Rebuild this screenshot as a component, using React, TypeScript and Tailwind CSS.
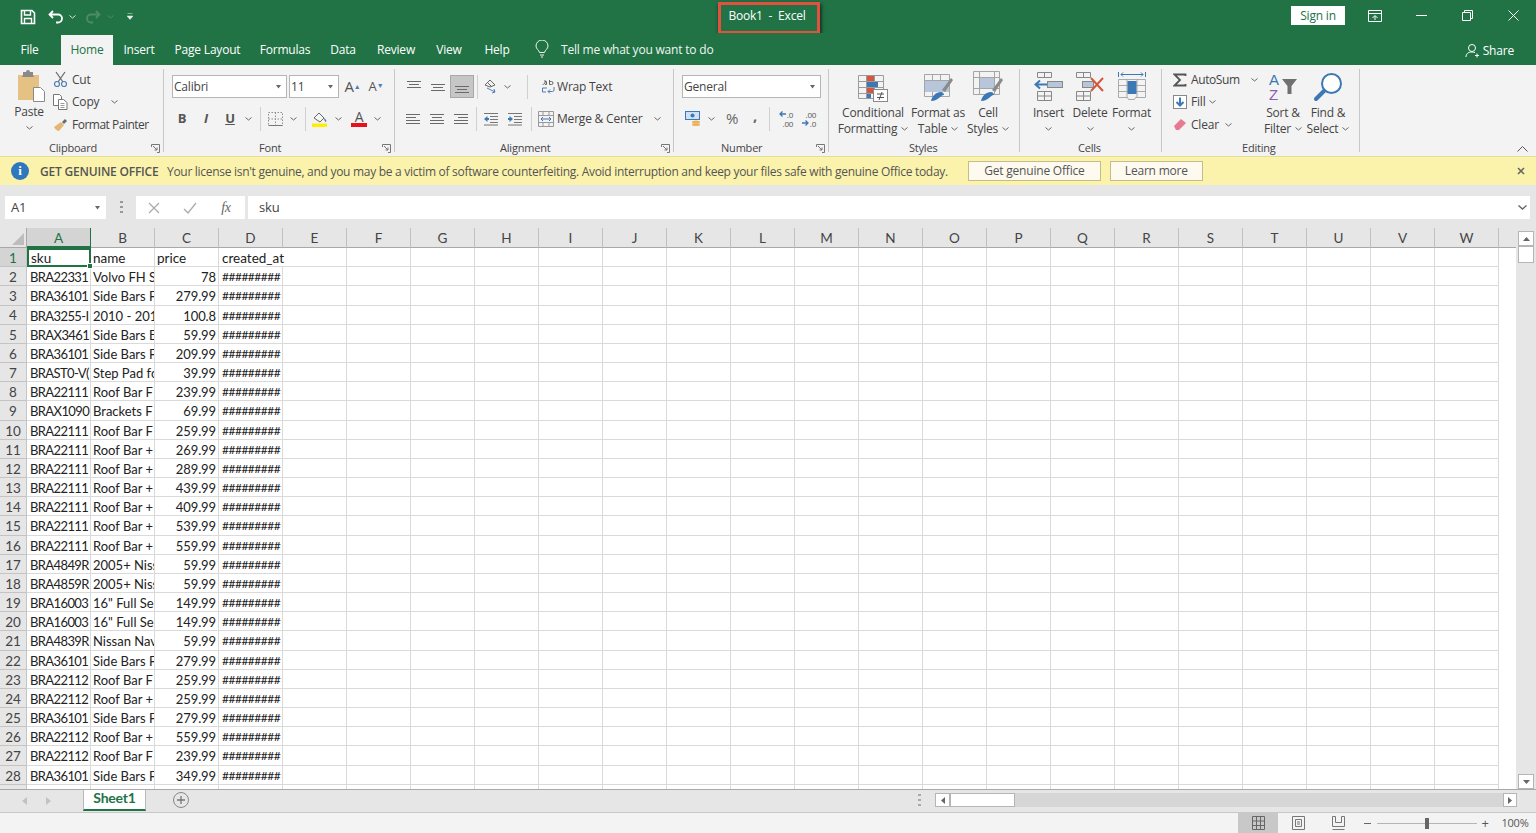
import { Fragment, ReactNode } from "react";

const COLS = "ABCDEFGHIJKLMNOPQRSTUVW".split("");

const ROWS: [string, string, string][] = [
  ["BRA22331", "Volvo FH S", "78"],
  ["BRA36101", "Side Bars F", "279.99"],
  ["BRA3255-I", "2010 - 201", "100.8"],
  ["BRAX3461", "Side Bars E", "59.99"],
  ["BRA36101", "Side Bars F", "209.99"],
  ["BRAST0-V(", "Step Pad fc", "39.99"],
  ["BRA22111", "Roof Bar F", "239.99"],
  ["BRAX1090", "Brackets F", "69.99"],
  ["BRA22111", "Roof Bar F", "259.99"],
  ["BRA22111", "Roof Bar +", "269.99"],
  ["BRA22111", "Roof Bar +", "289.99"],
  ["BRA22111", "Roof Bar +", "439.99"],
  ["BRA22111", "Roof Bar +", "409.99"],
  ["BRA22111", "Roof Bar +", "539.99"],
  ["BRA22111", "Roof Bar +", "559.99"],
  ["BRA4849R", "2005+ Niss", "59.99"],
  ["BRA4859R", "2005+ Niss", "59.99"],
  ["BRA16003", '16" Full Se', "149.99"],
  ["BRA16003", '16" Full Se', "149.99"],
  ["BRA4839R", "Nissan Nav", "59.99"],
  ["BRA36101", "Side Bars F", "279.99"],
  ["BRA22112", "Roof Bar F", "259.99"],
  ["BRA22112", "Roof Bar +", "259.99"],
  ["BRA36101", "Side Bars F", "279.99"],
  ["BRA22112", "Roof Bar +", "559.99"],
  ["BRA22112", "Roof Bar F", "239.99"],
  ["BRA36101", "Side Bars F", "349.99"],
];

function Chev({ color = "#666" }: { color?: string }) {
  return (
    <svg width="7" height="4" viewBox="0 0 7 4" className="inline-block shrink-0">
      <path d="M.5.5 3.5 3 6.5.5" fill="none" stroke={color} strokeWidth="1" />
    </svg>
  );
}

function Caret() {
  return (
    <svg width="7" height="4" viewBox="0 0 7 4" className="shrink-0">
      <path d="M1 0h5L3.5 3.5z" fill="#666" />
    </svg>
  );
}

function Slot({ w, children }: { w: string; children?: ReactNode }) {
  return <div className={`flex items-center justify-center shrink-0 h-full ${w}`}>{children}</div>;
}

function VSep() {
  return <div className="w-px h-[24px] bg-[#d0d0d0]" />;
}

function Lines({ a, b, c }: { a: [number, number]; b: [number, number]; c: [number, number] }) {
  return (
    <svg width="16" height="14" viewBox="0 0 16 14">
      <g stroke="#6a6a6a" strokeWidth="1">
        <path d={`M${a[0]} 2.5H${a[1]}M${b[0]} 5.5H${b[1]}M${c[0]} 8.5H${c[1]}M${a[0]} 11.5H${a[1]}`} />
      </g>
    </svg>
  );
}

function VAlign({ y }: { y: number }) {
  return (
    <svg width="16" height="14" viewBox="0 0 16 14">
      <path d={`M1 ${y}.5H15M3 ${y + 3}.5H13M1 ${y + 6}.5H15`} stroke="#6a6a6a" fill="none" />
    </svg>
  );
}

function Launcher() {
  return (
    <svg width="9" height="9" viewBox="0 0 9 9" className="shrink-0">
      <path d="M.5 3V.5H8.5V8.5H6M2 2l4 4M6 3.5V6H3.5" fill="none" stroke="#777" />
    </svg>
  );
}

function SmallArrow({ dir }: { dir: "left" | "right" }) {
  return (
    <svg width="7" height="6" viewBox="0 0 7 6" className="mr-[1px]">
      <path d={dir === "left" ? "M7 3H1M3.500.5 1 3l2.500 2.500" : "M0 3h6M3.500.5 6 3 3.500 5.500"} fill="none" stroke="#3c78b5" strokeWidth="1.300" />
    </svg>
  );
}

function Group({ w, label, labelClass, launcher, children }: {
  w: string;
  label: string;
  labelClass: string;
  launcher?: boolean;
  children: ReactNode;
}) {
  return (
    <div className={`${w} shrink-0 h-[83px] flex flex-col border-r border-[#c8c8c8]`}>
      <div className="h-[71px]">{children}</div>
      <div className="h-[12px] flex items-center">
        <span className={`${labelClass} mt-[2px] text-[11px] leading-none text-[#444]`}>{label}</span>
        {launcher && <span className="ml-auto mr-[3px] mt-[4px] flex"><Launcher /></span>}
      </div>
    </div>
  );
}

function BigButton({ w, icon, line1, line2, chevOnly }: {
  w: string;
  icon: ReactNode;
  line1: string;
  line2?: string;
  chevOnly?: boolean;
}) {
  return (
    <div className={`${w} shrink-0 flex flex-col items-center`}>
      <div className="h-[34px] flex items-center justify-center">{icon}</div>
      <div className="mt-[2px] leading-[16px] whitespace-nowrap">{line1}</div>
      <div className="leading-[15px] h-[15px] whitespace-nowrap flex items-center gap-[4px]">
        {line2}
        {(line2 || chevOnly) && <Chev />}
      </div>
    </div>
  );
}

function SelectBox({ w, text }: { w: string; text: string }) {
  return (
    <div className={`${w} h-[23px] bg-white border border-[#b5b5b5] flex items-center justify-between pl-[1px] pr-[4px] shrink-0`}>
      <span>{text}</span>
      <Caret />
    </div>
  );
}

function Table({ children }: { children?: ReactNode }) {
  return (
    <svg width="32" height="32" viewBox="0 0 32 32">
      {children}
    </svg>
  );
}

function TitleBar() {
  return (
    <div className="h-[33px] flex bg-[#217346] text-white">
      <div className="w-[718px] flex items-center">
        <Slot w="w-[20px]" />
        <svg width="16" height="16" viewBox="0 0 16 16">
          <path d="M1.5 1.5H12L14.5 4V14.5H1.5z" fill="none" stroke="#fff" strokeWidth="1.6" />
          <path d="M4.5 2v4h6V2M4.5 14v-4.5h7V14" fill="none" stroke="#fff" strokeWidth="1.4" />
        </svg>
        <Slot w="w-[12px]" />
        <svg width="16" height="14" viewBox="0 0 16 14">
          <path d="M1.5 4.5H10a4 4 0 0 1 0 8H8M5 1 1.5 4.5 5 8" fill="none" stroke="#fff" strokeWidth="1.8" />
        </svg>
        <Slot w="w-[17px]"><Chev color="#d8e6dd" /></Slot>
        <Slot w="w-[4px]" />
        <svg width="16" height="14" viewBox="0 0 16 14">
          <path d="M14.5 4.5H6a4 4 0 0 0 0 8h2M11 1l3.500 3.500L11 8" fill="none" stroke="#4d8c69" strokeWidth="1.8" />
        </svg>
        <Slot w="w-[19px]"><Chev color="#4d8c69" /></Slot>
        <Slot w="w-[20px]">
          <svg width="6" height="7" viewBox="0 0 6 7">
            <path d="M.5.5h5M0 3h6L3 6.500z" fill="#e4efe8" stroke="#e4efe8" strokeWidth=".5" />
          </svg>
        </Slot>
      </div>
      <div className="w-[102px] h-[32px] mt-[2px] border-[3px] border-[#e2513f] shadow-[1px_2px_4px_rgba(0,0,0,0.75)] flex items-center justify-center text-[12px] whitespace-pre pb-[4px] pr-[4px]">
        {"Book1  -  Excel"}
      </div>
      <div className="flex-1 flex items-start justify-end">
        <div className="w-[54px] h-[19px] mt-[6px] mr-[7px] bg-white text-[#217346] text-[12px] flex items-center justify-center">Sign in</div>
        <Slot w="w-[46px]">
          <svg width="14" height="12" viewBox="0 0 14 12" className="mb-[2px]">
            <path d="M.5.5h13v11H.5zM.5 3.500h13M4.500 8 7 5.500 9.500 8M7 6v4" fill="none" stroke="#fff" />
          </svg>
        </Slot>
        <Slot w="w-[46px]"><svg width="11" height="1" className="mb-[2px]"><path d="M0 .5h11" stroke="#fff" /></svg></Slot>
        <Slot w="w-[46px]">
          <svg width="11" height="11" viewBox="0 0 11 11" className="mb-[2px]">
            <path d="M.5 2.500h8v8h-8zM2.500 2.500v-2h8v8h-2" fill="none" stroke="#fff" />
          </svg>
        </Slot>
        <Slot w="w-[46px]">
          <svg width="11" height="11" viewBox="0 0 11 11" className="mb-[2px]">
            <path d="M.5.5l10 10M10.500.5l-10 10" fill="none" stroke="#fff" />
          </svg>
        </Slot>
      </div>
    </div>
  );
}

function TabRow() {
  const tabs: [string, string][] = [
    ["Insert", "w-[52px]"],
    ["Page Layout", "w-[85px]"],
    ["Formulas", "w-[70px]"],
    ["Data", "w-[46px]"],
    ["Review", "w-[60px]"],
    ["View", "w-[46px]"],
    ["Help", "w-[50px]"],
  ];
  return (
    <div className="h-[32px] flex bg-[#217346] text-white text-[12px]">
      <div className="w-[59px] mr-[2px] flex items-center justify-center pt-[1px]">File</div>
      <div className="w-[52px] mt-[2px] bg-[#f3f3f3] text-[#217346] flex items-center justify-center">Home</div>
      {tabs.map(([name, w]) => (
        <div key={name} className={`${w} flex items-center justify-center pt-[1px]`}>{name}</div>
      ))}
      <Slot w="w-[39px]">
        <svg width="14" height="18" viewBox="0 0 14 18">
          <path d="M4.500 12.500C4 10 1 9 1 6a6 6 0 0 1 12 0c0 3-3 4-3.500 6.500zM5 15h4M6 17h2" fill="none" stroke="#eef5f0" />
        </svg>
      </Slot>
      <div className="flex items-center pt-[1px] text-[#f0f6f2]">Tell me what you want to do</div>
      <div className="ml-auto flex items-center gap-[3px] pr-[22px] pt-[3px]">
        <svg width="15" height="15" viewBox="0 0 15 15">
          <circle cx="7" cy="5" r="3.500" fill="none" stroke="#fff" />
          <path d="M1 14c0-3 2-5 6-5 1 0 2 .2 3 .7M10 12.500h4M12 10.500v4" fill="none" stroke="#fff" />
        </svg>
        <span>Share</span>
      </div>
    </div>
  );
}

function ClipboardGroup() {
  return (
    <Group w="w-[164px]" label="Clipboard" labelClass="ml-[49px]" launcher>
      <div className="flex">
        <div className="w-[48px] pl-[10px] flex flex-col items-center">
          <svg width="32" height="34" viewBox="0 0 32 34">
            <rect x="5" y="6" width="21" height="25" fill="#e6c184" />
            <path d="M10 6V3h3a2 2 0 0 1 4 0h3v3l1 2H9z" fill="#8a8a8a" />
            <path d="M20.500 18.500h7l4 4v10h-11z" fill="#fff" stroke="#8a8a8a" />
          </svg>
          <div className="mt-[1px] leading-[16px]">Paste</div>
          <div className="mt-[4px] h-[8px] flex items-center"><Chev /></div>
        </div>
        <div className="ml-[5px] flex flex-col">
          <div className="h-[21px] flex items-center">
            <svg width="15" height="17" viewBox="0 0 15 17" className="mr-[4px]">
              <path d="M3 1l7 10M12 1 5 11" fill="none" stroke="#666" strokeWidth="1.2" />
              <circle cx="4" cy="13" r="2.500" fill="none" stroke="#4f7fb5" strokeWidth="1.200" />
              <circle cx="11" cy="13" r="2.500" fill="none" stroke="#4f7fb5" strokeWidth="1.200" />
            </svg>
            <span>Cut</span>
          </div>
          <div className="h-[23px] flex items-center">
            <svg width="15" height="16" viewBox="0 0 15 16" className="mr-[4px]">
              <path d="M.5.5h6l2 2v9h-8z" fill="#fff" stroke="#777" />
              <path d="M5.500 5.500h5l3.500 3v7H5.500z" fill="#fff" stroke="#777" />
              <path d="M7.500 9.500h4M7.500 11.500h4M7.500 13.500h4" stroke="#999" />
            </svg>
            <span>Copy</span>
            <span className="ml-[12px] flex"><Chev /></span>
          </div>
          <div className="h-[23px] flex items-center">
            <svg width="15" height="14" viewBox="0 0 15 14" className="mr-[4px]">
              <path d="M1 9 8 4l3 3-5 6c-2 0-4-2-5-4z" fill="#e3b773" />
              <path d="M9 4l3-3 2 2-3 3z" fill="#6a6a6a" />
            </svg>
            <span className="tracking-[-0.5px]">Format Painter</span>
          </div>
        </div>
      </div>
    </Group>
  );
}

function FontGroup() {
  return (
    <Group w="w-[231px]" label="Font" labelClass="ml-[95px]" launcher>
      <div className="flex pl-[8px] pt-[6px] h-[29px]">
        <SelectBox w="w-[115px]" text="Calibri" />
        <div className="w-[2px]" />
        <SelectBox w="w-[50px]" text="11" />
        <Slot w="w-[27px]">
          <span className="text-[15px] text-[#555] leading-none">A<sup className="text-[7px] text-[#4f7fb5]">▲</sup></span>
        </Slot>
        <Slot w="w-[20px]">
          <span className="text-[13px] text-[#555] leading-none">A<sup className="text-[7px] text-[#4f7fb5]">▼</sup></span>
        </Slot>
      </div>
      <div className="flex pl-[6px] mt-[9px] h-[23px]">
        <Slot w="w-[24px]"><span className="font-bold text-[13px] text-[#555]">B</span></Slot>
        <Slot w="w-[24px]"><span className="font-bold italic text-[13px] text-[#555]">I</span></Slot>
        <Slot w="w-[24px]"><span className="font-bold underline text-[13px] text-[#555]">U</span></Slot>
        <Slot w="w-[12px]"><Chev /></Slot>
        <Slot w="w-[12px]"><VSep /></Slot>
        <Slot w="w-[18px]">
          <svg width="15" height="14" viewBox="0 0 15 14">
            <path d="M.5.5h14v13H.5zM7.500.5v13M.5 7h14" fill="none" stroke="#8f8f8f" strokeDasharray="1.500 1.500" />
            <path d="M.5 13.500h14" stroke="#777" />
          </svg>
        </Slot>
        <Slot w="w-[18px]"><Chev /></Slot>
        <Slot w="w-[6px]"><VSep /></Slot>
        <Slot w="w-[23px]">
          <svg width="17" height="16" viewBox="0 0 17 16">
            <path d="M3 7l5-5 5 5-4 4z" fill="#f5f5f5" stroke="#666" />
            <path d="M13 7c2 1 3 3 2 4-1 0-2-2-2-4z" fill="#4f7fb5" />
            <rect x="1" y="12.500" width="15" height="3.500" fill="#ffee00" />
          </svg>
        </Slot>
        <Slot w="w-[14px]"><Chev /></Slot>
        <Slot w="w-[28px]">
          <div className="flex flex-col items-center">
            <span className="text-[14px] leading-[13px] text-[#555]">A</span>
            <div className="w-[16px] h-[4px] bg-[#e8101c]" />
          </div>
        </Slot>
        <Slot w="w-[8px]"><Chev /></Slot>
      </div>
    </Group>
  );
}

function AlignmentGroup() {
  return (
    <Group w="w-[279px]" label="Alignment" labelClass="ml-[105px]" launcher>
      <div className="flex pl-[7px] pt-[6px] h-[29px]">
        <Slot w="w-[24px]"><VAlign y={1} /></Slot>
        <Slot w="w-[24px]"><VAlign y={4} /></Slot>
        <Slot w="w-[24px] bg-[#c6c6c6] border border-[#a8a8a8]"><VAlign y={6} /></Slot>
        <Slot w="w-[7px]"><VSep /></Slot>
        <Slot w="w-[20px]">
          <svg width="16" height="15" viewBox="0 0 16 15">
            <path d="M2 6l5-5 5 5-5 2zM5 4l4 4" fill="none" stroke="#666" />
            <path d="M4 9l8 4M12 13l-3 1M12 13l-1-3" fill="none" stroke="#4f7fb5" />
          </svg>
        </Slot>
        <Slot w="w-[12px]"><Chev /></Slot>
        <Slot w="w-[28px]"><VSep /></Slot>
        <Slot w="w-[14px]">
          <svg width="14" height="15" viewBox="0 0 14 15">
            <path d="M2 6c0-1 1-1.500 2-1.500V1M4 2.500h1.500v3H4M8.500 1v4.500h2a1.500 1.500 0 0 0 0-3h-2" fill="none" stroke="#666" />
            <path d="M6 9H1.500v4H5M13 8v3a1.500 1.500 0 0 1-1.500 1.500H7M9 10.500l-2 2 2 2" fill="none" stroke="#4f7fb5" />
          </svg>
        </Slot>
        <span className="ml-[2px] self-center">Wrap Text</span>
      </div>
      <div className="flex pl-[6px] mt-[9px] h-[23px]">
        <Slot w="w-[24px]"><Lines a={[1, 15]} b={[1, 11]} c={[1, 15]} /></Slot>
        <Slot w="w-[24px]"><Lines a={[1, 15]} b={[3, 13]} c={[1, 15]} /></Slot>
        <Slot w="w-[24px]"><Lines a={[1, 15]} b={[5, 15]} c={[1, 15]} /></Slot>
        <Slot w="w-[6px]"><VSep /></Slot>
        <Slot w="w-[24px]">
          <svg width="16" height="14" viewBox="0 0 16 14">
            <path d="M1 1.500h14M7 4.500h8M7 7.500h8M7 10.500h8M1 13h14" stroke="#777" />
            <path d="M1 7l3.500-3v2H6v2H4.500v2z" fill="#3c78b5" />
          </svg>
        </Slot>
        <Slot w="w-[24px]">
          <svg width="16" height="14" viewBox="0 0 16 14">
            <path d="M1 1.500h14M7 4.500h8M7 7.500h8M7 10.500h8M1 13h14" stroke="#777" />
            <path d="M6 7 2.500 4v2H1v2h1.500v2z" fill="#3c78b5" />
          </svg>
        </Slot>
        <Slot w="w-[8px]"><VSep /></Slot>
        <Slot w="w-[16px] ml-[3px]">
          <svg width="16" height="16" viewBox="0 0 16 16">
            <path d="M.5.5h15v15H.5zM.5 4.500h15M.5 11.500h15M5 .5v4M11 .5v4M5 11.500v4M11 11.500v4" fill="none" stroke="#999" />
            <path d="M3 8h10M5 6 3 8l2 2M11 6l2 2-2 2" fill="none" stroke="#3c78b5" />
          </svg>
        </Slot>
        <span className="ml-[3px] self-center w-[86px]">Merge &amp; Center</span>
        <Slot w="w-[28px]"><Chev /></Slot>
      </div>
    </Group>
  );
}

function NumberGroup() {
  return (
    <Group w="w-[155px]" label="Number" labelClass="ml-[47px]" launcher>
      <div className="flex pl-[8px] pt-[6px] h-[29px]">
        <SelectBox w="w-[139px]" text="General" />
      </div>
      <div className="flex pl-[8px] mt-[9px] h-[23px]">
        <Slot w="w-[22px]">
          <svg width="16" height="15" viewBox="0 0 16 15">
            <rect x=".5" y=".5" width="14" height="8" fill="#cfe0f2" stroke="#3c78b5" />
            <circle cx="7.500" cy="4.500" r="2" fill="#3c78b5" />
            <ellipse cx="11" cy="11" rx="4" ry="1.500" fill="#eab45c" />
            <ellipse cx="11" cy="13.500" rx="4" ry="1.500" fill="#eab45c" />
          </svg>
        </Slot>
        <Slot w="w-[14px]"><Chev /></Slot>
        <Slot w="w-[28px]"><span className="text-[15px] text-[#666]">%</span></Slot>
        <Slot w="w-[18px]"><span className="text-[15px] font-bold text-[#666] leading-none pb-[6px]">,</span></Slot>
        <Slot w="w-[11px]"><VSep /></Slot>
        <Slot w="w-[22px]">
          <div className="flex flex-col text-[8px] leading-[9px] text-[#555] items-end">
            <span className="flex items-center"><SmallArrow dir="left" />.0</span>
            <span>.00</span>
          </div>
        </Slot>
        <Slot w="w-[24px]">
          <div className="flex flex-col text-[8px] leading-[9px] text-[#555] items-end">
            <span>.00</span>
            <span className="flex items-center"><SmallArrow dir="right" />.0</span>
          </div>
        </Slot>
      </div>
    </Group>
  );
}

function CondIcon() {
  return (
    <Table>
      <path d="M1.500 5.500h25v23h-25zM1.500 11.500h25M1.500 17.500h25M1.500 23.500h25M9.500 5.500v23M17.500 5.500v23" fill="none" stroke="#9b9b9b" />
      <rect x="10" y="6" width="7" height="5" fill="#d5573b" />
      <rect x="10" y="12" width="11" height="5" fill="#3c78b5" />
      <rect x="10" y="18" width="7" height="5" fill="#d5573b" />
      <rect x="10" y="24" width="4" height="4" fill="#3c78b5" />
      <rect x="16.500" y="19.500" width="14" height="12" fill="#fff" stroke="#888" />
      <path d="M20 24h7M20 27.500h7M25 22l-3 8" stroke="#555" fill="none" />
    </Table>
  );
}

function FormatTableIcon() {
  return (
    <Table>
      <path d="M2.500 4.500h25v22h-25zM2.500 10.500h25M2.500 16.500h25M2.500 21.500h25M10.500 4.500v22M18.500 4.500v22" fill="none" stroke="#a5a5a5" />
      <rect x="3" y="11" width="24" height="11" fill="#b8c6dc" />
      <path d="M20 20 29 8l2 2-8 12z" fill="#8a8a8a" />
      <path d="M9 31c1-5 5-9 10-9 2 0 3 2 3 3-4 0-5 6-13 6z" fill="#3c78b5" />
    </Table>
  );
}

function CellStylesIcon() {
  return (
    <Table>
      <path d="M1.500 1.500h26v23h-26zM1.500 7.500h26M1.500 18.500h26M7.500 1.500v23M22.500 1.500v23" fill="none" stroke="#a5a5a5" />
      <rect x="8" y="8" width="14" height="10" fill="#b8c6dc" />
      <path d="M20 20 29 8l2 2-8 12z" fill="#8a8a8a" />
      <path d="M9 31c1-5 5-9 10-9 2 0 3 2 3 3-4 0-5 6-13 6z" fill="#3c78b5" />
    </Table>
  );
}

function StylesGroup() {
  return (
    <Group w="w-[191px]" label="Styles" labelClass="ml-[80px]">
      <div className="flex pl-[8px]">
        <BigButton w="w-[72px]" icon={<CondIcon />} line1="Conditional" line2="Formatting" />
        <BigButton w="w-[58px]" icon={<FormatTableIcon />} line1="Format as" line2="Table" />
        <BigButton w="w-[42px]" icon={<CellStylesIcon />} line1="Cell" line2="Styles" />
      </div>
    </Group>
  );
}

function CellsGroup() {
  return (
    <Group w="w-[142px]" label="Cells" labelClass="ml-[58px]">
      <div className="flex pl-[8px]">
        <BigButton
          w="w-[41px]"
          chevOnly
          line1="Insert"
          icon={
            <svg width="30" height="30" viewBox="0 0 30 30">
              <path d="M3.500 1.500h14v5h-14zM10.500 1.500v5M3.500 20.500h14v9h-14zM3.500 25h14M10.500 20.500v9" fill="none" stroke="#888" />
              <rect x="13.500" y="10.500" width="15" height="6" fill="#b8c6dc" stroke="#888" />
              <path d="M13 13.500H2M6 9.500l-4.500 4 4.500 4" fill="none" stroke="#3c78b5" strokeWidth="2" />
            </svg>
          }
        />
        <BigButton
          w="w-[42px]"
          chevOnly
          line1="Delete"
          icon={
            <svg width="30" height="30" viewBox="0 0 30 30">
              <path d="M1.500 1.500h14v5h-14zM8.500 1.500v5M1.500 20.500h14v9h-14zM1.500 25h14M8.500 20.500v9" fill="none" stroke="#888" />
              <rect x="7.500" y="10.500" width="11" height="6" fill="#b8c6dc" stroke="#888" />
              <path d="M16 7l12 13M28 7 16 20" fill="none" stroke="#d5573b" strokeWidth="2" />
            </svg>
          }
        />
        <BigButton
          w="w-[41px]"
          chevOnly
          line1="Format"
          icon={
            <svg width="30" height="30" viewBox="0 0 30 30">
              <path d="M1.500 1v5M28.500 1v5M4 3.500h22M4 3.500l2-2M4 3.500l2 2M26 3.500l-2-2M26 3.500l-2 2" fill="none" stroke="#3c78b5" />
              <path d="M1.500 8.500h27v18h-10l-1 2h-6l-1-2h-9zM10 8.500v18M20 8.500v18M1.500 14.500h27M1.500 20.500h27" fill="none" stroke="#aaa" />
              <rect x="10.500" y="10" width="9" height="13" fill="#3c78b5" />
            </svg>
          }
        />
      </div>
    </Group>
  );
}

function EditingGroup() {
  return (
    <Group w="w-[198px]" label="Editing" labelClass="ml-[80px]">
      <div className="flex">
        <div className="w-[100px] pl-[11px] flex flex-col">
          <div className="h-[21px] flex items-center">
            <svg width="14" height="14" viewBox="0 0 14 14" className="mr-[4px]">
              <path d="M12.500 3V1.500h-11L7 7l-5.500 5.500h11V11" fill="none" stroke="#555" strokeWidth="1.800" />
            </svg>
            <span className="tracking-[-0.4px]">AutoSum</span>
            <span className="ml-[11px] flex"><Chev /></span>
          </div>
          <div className="h-[23px] flex items-center">
            <svg width="14" height="14" viewBox="0 0 14 14" className="mr-[4px]">
              <rect x=".5" y=".5" width="13" height="13" fill="#fff" stroke="#888" />
              <path d="M7 2.500V10M3.500 7 7 10.500 10.500 7" fill="none" stroke="#3c78b5" strokeWidth="2" />
            </svg>
            <span>Fill</span>
            <span className="ml-[4px] flex"><Chev /></span>
          </div>
          <div className="h-[23px] flex items-center">
            <svg width="14" height="13" viewBox="0 0 14 13" className="mr-[4px]">
              <path d="M1 8l7-7 5 4-7 7H3z" fill="#e8798f" />
            </svg>
            <span>Clear</span>
            <span className="ml-[6px] flex"><Chev /></span>
          </div>
        </div>
        <BigButton
          w="w-[42px]"
          line1="Sort &"
          line2="Filter"
          icon={
            <svg width="30" height="30" viewBox="0 0 30 30" className="mt-[2px]">
              <text x="1" y="13" fontSize="15" fill="#3c78b5" fontFamily="Liberation Sans">A</text>
              <text x="1" y="28" fontSize="15" fill="#8d5db0" fontFamily="Liberation Sans">Z</text>
              <path d="M14 7h15l-5.500 7v8h-4v-8z" fill="#707070" />
            </svg>
          }
        />
        <BigButton
          w="w-[48px]"
          line1="Find &"
          line2="Select"
          icon={
            <svg width="30" height="30" viewBox="0 0 30 30" className="mt-[1px]">
              <circle cx="18.500" cy="11.500" r="9.500" fill="#fff" stroke="#3c78b5" strokeWidth="2" />
              <path d="M11 19 3 27" stroke="#3c78b5" strokeWidth="4" strokeLinecap="round" />
            </svg>
          }
        />
      </div>
    </Group>
  );
}

function Ribbon() {
  return (
    <div className="h-[92px] bg-[#f3f3f3] pt-[4px] flex text-[12px] text-[#444] border-b border-[#e6dc9a]">
      <ClipboardGroup />
      <FontGroup />
      <AlignmentGroup />
      <NumberGroup />
      <StylesGroup />
      <CellsGroup />
      <EditingGroup />
      <div className="flex-1 flex items-end justify-end pr-[8px] pb-[4px]">
        <svg width="11" height="6" viewBox="0 0 11 6"><path d="M.5 5.500l5-5 5 5" fill="none" stroke="#555" /></svg>
      </div>
    </div>
  );
}

function Banner() {
  return (
    <div className="h-[28px] bg-[#fbf3ab] flex items-center text-[12px] text-[#555] pl-[11px] whitespace-nowrap">
      <div className="w-[18px] h-[18px] rounded-full bg-[#2f78bd] text-white flex items-center justify-center text-[13px] font-bold font-['Liberation_Serif',serif]">i</div>
      <span className="ml-[11px] pt-[2px] font-semibold w-[127px]">GET GENUINE OFFICE</span>
      <span className="pt-[2px] tracking-[-0.29px]">Your license isn't genuine, and you may be a victim of software counterfeiting. Avoid interruption and keep your files safe with genuine Office today.</span>
      <div className="ml-[20px] w-[133px] h-[20px] border border-[#c4bd8a] bg-[#fefaf0] flex items-center justify-center">Get genuine Office</div>
      <div className="ml-[9px] w-[93px] h-[20px] border border-[#c4bd8a] bg-[#fefaf0] flex items-center justify-center">Learn more</div>
      <div className="ml-auto pr-[11px]">
        <svg width="8" height="8" viewBox="0 0 8 8"><path d="M1 1l6 6M7 1 1 7" stroke="#666" strokeWidth="1.600" /></svg>
      </div>
    </div>
  );
}

function FormulaBar() {
  return (
    <div className="h-[43px] bg-[#e6e6e6] flex items-start pt-[11px] pl-[5px] pr-[6px] text-[13px] text-[#444]">
      <div className="w-[101px] h-[23px] bg-white flex items-center justify-between pl-[6px] pr-[5px]">
        <span>A1</span>
        <Caret />
      </div>
      <div className="w-[30px] h-[23px] flex items-center justify-center">
        <svg width="3" height="13" viewBox="0 0 3 13"><path d="M0 0h3v2H0zM0 5h3v2H0zM0 10h3v2H0z" fill="#999" /></svg>
      </div>
      <div className="w-[109px] h-[23px] bg-white flex items-center">
        <Slot w="w-[35px]">
          <svg width="12" height="12" viewBox="0 0 12 12"><path d="M1 1l10 10M11 1 1 11" stroke="#aaa" strokeWidth="1.300" /></svg>
        </Slot>
        <Slot w="w-[38px]">
          <svg width="14" height="12" viewBox="0 0 14 12"><path d="M1 7l4 4 8-10" fill="none" stroke="#aaa" strokeWidth="1.300" /></svg>
        </Slot>
        <Slot w="w-[34px]"><span className="italic text-[14px] text-[#666] font-['Liberation_Serif',serif]">fx</span></Slot>
      </div>
      <div className="ml-[3px] flex-1 h-[23px] bg-white flex items-center justify-between pl-[11px] pr-[3px]">
        <span>sku</span>
        <svg width="9" height="5" viewBox="0 0 9 5"><path d="M.5.5l4 3.500 4-3.500" fill="none" stroke="#666" strokeWidth="1.400" /></svg>
      </div>
    </div>
  );
}

function Sheet() {
  const rowHead = "flex items-center justify-center bg-[#e6e6e6] border-r border-b border-[#c4c4c4] text-[#444] pt-[2px]";
  const base = "border-r border-b border-[#dadada] overflow-hidden whitespace-nowrap leading-[20px]";
  const blank = "border-r border-b border-[#dadada]";
  return (
    <div className="flex-1 min-w-0 overflow-hidden bg-white">
      <div className="grid grid-cols-[27px_repeat(23,64px)_1fr] grid-rows-[20px] auto-rows-[19.185px] font-['Lato',sans-serif] text-[13.5px] text-[#222]">
        <div className="bg-[#e6e6e6] border-r border-b border-[#a8a8a8] flex items-end justify-end pr-[2px] pb-[2px]">
          <svg width="12" height="12" viewBox="0 0 12 12"><path d="M12 0v12H0z" fill="#bdbdbd" /></svg>
        </div>
        {COLS.map((c) => (
          <div
            key={c}
            className={
              c === "A"
                ? "flex items-center justify-center bg-[#d4d4d4] border-r border-b-2 border-[#217346] text-[#217346] pt-[2px]"
                : "flex items-center justify-center bg-[#e6e6e6] border-r border-b border-[#c0c0c0] border-b-[#a8a8a8] text-[#444] pt-[2px]"
            }
          >
            {c}
          </div>
        ))}
        <div className="bg-[#e6e6e6] border-b border-[#a8a8a8]" />

        <div className="flex items-center justify-center bg-[#d4d4d4] border-r border-b border-[#c4c4c4] text-[#217346] pt-[2px]">1</div>
        <div className="relative border-2 border-[#217346] leading-[16px] pl-[2px] overflow-visible">
          sku
          <div className="absolute right-[-4px] bottom-[-4px] w-[6px] h-[6px] bg-[#217346] border border-white" />
        </div>
        <div className={`${base} pl-[2px]`}>name</div>
        <div className={`${base} pl-[2px]`}>price</div>
        <div className="border-b border-[#dadada] leading-[20px] pl-[3px] whitespace-nowrap">created_at</div>
        {COLS.slice(4).map((c) => <div key={c} className={blank} />)}
        <div />

        {ROWS.map(([sku, name, price], i) => (
          <Fragment key={i}>
            <div className={rowHead}>{i + 2}</div>
            <div className={`${base} text-[13px] pl-[3px] tracking-[-0.6px]`}>{sku}</div>
            <div className={`${base} text-[13px] pl-[2px]`}>{name}</div>
            <div className={`${base} text-[13px] text-right pr-[2px] tracking-[-0.1px]`}>{price}</div>
            <div className={`${base} text-[12px] pl-[3px] tracking-[-0.5px]`}>#########</div>
            {COLS.slice(4).map((c) => <div key={c} className={blank} />)}
            <div />
          </Fragment>
        ))}
        <div className="bg-[#e6e6e6] border-r border-[#c4c4c4]" />
        {COLS.map((c) => <div key={c} className="border-r border-[#dadada]" />)}
        <div />
      </div>
    </div>
  );
}

function VScroll() {
  const btn = "w-[16px] h-[15px] bg-white border border-[#b5b5b5] flex items-center justify-center";
  return (
    <div className="w-[20px] shrink-0 bg-[#e6e6e6] flex flex-col items-center pt-[3px]">
      <div className={btn}>
        <svg width="7" height="4" viewBox="0 0 7 4"><path d="M0 4h7L3.500 0z" fill="#666" /></svg>
      </div>
      <div className="w-[16px] h-[17px] bg-white border border-[#b5b5b5]" />
      <div className={`${btn} mt-auto`}>
        <svg width="7" height="4" viewBox="0 0 7 4"><path d="M0 0h7L3.500 4z" fill="#666" /></svg>
      </div>
    </div>
  );
}

function TabBar() {
  return (
    <div className="h-[24px] bg-[#e6e6e6] flex items-start border-t border-[#a8a8a8] border-b-[#c8c8c8] border-b">
      <Slot w="w-[35px] h-[20px] ml-[7px]">
        <svg width="5" height="8" viewBox="0 0 5 8"><path d="M5 0v8L0 4z" fill="#c2c2c2" /></svg>
      </Slot>
      <Slot w="w-[12px] h-[20px]">
        <svg width="5" height="8" viewBox="0 0 5 8"><path d="M0 0v8l5-4z" fill="#c2c2c2" /></svg>
      </Slot>
      <div className="ml-[29px] w-[63px] h-[21px] bg-white border-x border-b-2 border-[#b9b9b9] border-b-[#217346] flex items-center justify-center text-[#217346] font-bold text-[14px] font-['Lato',sans-serif] pb-[4px]">
        Sheet1
      </div>
      <div className="ml-[27px] mt-[2px] w-[16px] h-[16px] rounded-full border border-[#888] flex items-center justify-center">
        <svg width="8" height="8" viewBox="0 0 8 8"><path d="M4 0v8M0 4h8" stroke="#777" strokeWidth="1.300" /></svg>
      </div>
      <div className="ml-[729px] mt-[4px] w-[3px] h-[12px] flex items-center">
        <svg width="3" height="12" viewBox="0 0 3 12"><path d="M0 0h3v2H0zM0 5h3v2H0zM0 10h3v2H0z" fill="#aaa" /></svg>
      </div>
      <div className="ml-[14px] mt-[3px] w-[582px] h-[14px] bg-[#d6d6d6] flex">
        <div className="w-[15px] bg-white border border-[#b5b5b5] flex items-center justify-center">
          <svg width="4" height="7" viewBox="0 0 4 7"><path d="M4 0v7L0 3.500z" fill="#666" /></svg>
        </div>
        <div className="w-[65px] bg-white border border-[#b5b5b5]" />
        <div className="ml-auto w-[14px] bg-white border border-[#b5b5b5] flex items-center justify-center">
          <svg width="4" height="7" viewBox="0 0 4 7"><path d="M0 0v7l4-3.500z" fill="#666" /></svg>
        </div>
      </div>
    </div>
  );
}

function StatusBar() {
  return (
    <div className="h-[20px] bg-[#f3f3f3] flex items-center justify-end text-[11px] text-[#555]">
      <Slot w="w-[40px] bg-[#c8c8c8]">
        <svg width="13" height="14" viewBox="0 0 13 14">
          <path d="M.5.500h12v13H.5zM.5 5h12M.5 9.500h12M4.500.5v13M8.500.5v13" fill="none" stroke="#666" />
        </svg>
      </Slot>
      <Slot w="w-[40px]">
        <svg width="13" height="14" viewBox="0 0 13 14">
          <path d="M.5.500h12v13H.5z" fill="none" stroke="#777" />
          <path d="M3.500 3.500h6v7h-6zM5 6h3M5 8h3" fill="none" stroke="#777" />
        </svg>
      </Slot>
      <Slot w="w-[40px]">
        <svg width="13" height="14" viewBox="0 0 13 14">
          <path d="M.5 10.500V.5h3v6h6V.5h3v10zM.5 13.500h12" fill="none" stroke="#777" />
        </svg>
      </Slot>
      <div className="w-[19px] pl-[6px]"><div className="w-[7px] h-px bg-[#666]" /></div>
      <div className="w-[100px] h-px bg-[#b5b5b5] flex items-center justify-center">
        <div className="w-[4px] h-[11px] bg-[#666]" />
      </div>
      <div className="w-[16px] text-center text-[13px] leading-none">+</div>
      <div className="w-[43px] pl-[1px] text-center">100%</div>
    </div>
  );
}

export default function App() {
  return (
    <div className="w-[1536px] h-[833px] overflow-hidden flex flex-col font-['Open_Sans',sans-serif] tracking-[-0.2px]">
      <TitleBar />
      <TabRow />
      <Ribbon />
      <Banner />
      <FormulaBar />
      <div className="flex-1 min-h-0 flex tracking-normal">
        <Sheet />
        <VScroll />
      </div>
      <TabBar />
      <StatusBar />
    </div>
  );
}
